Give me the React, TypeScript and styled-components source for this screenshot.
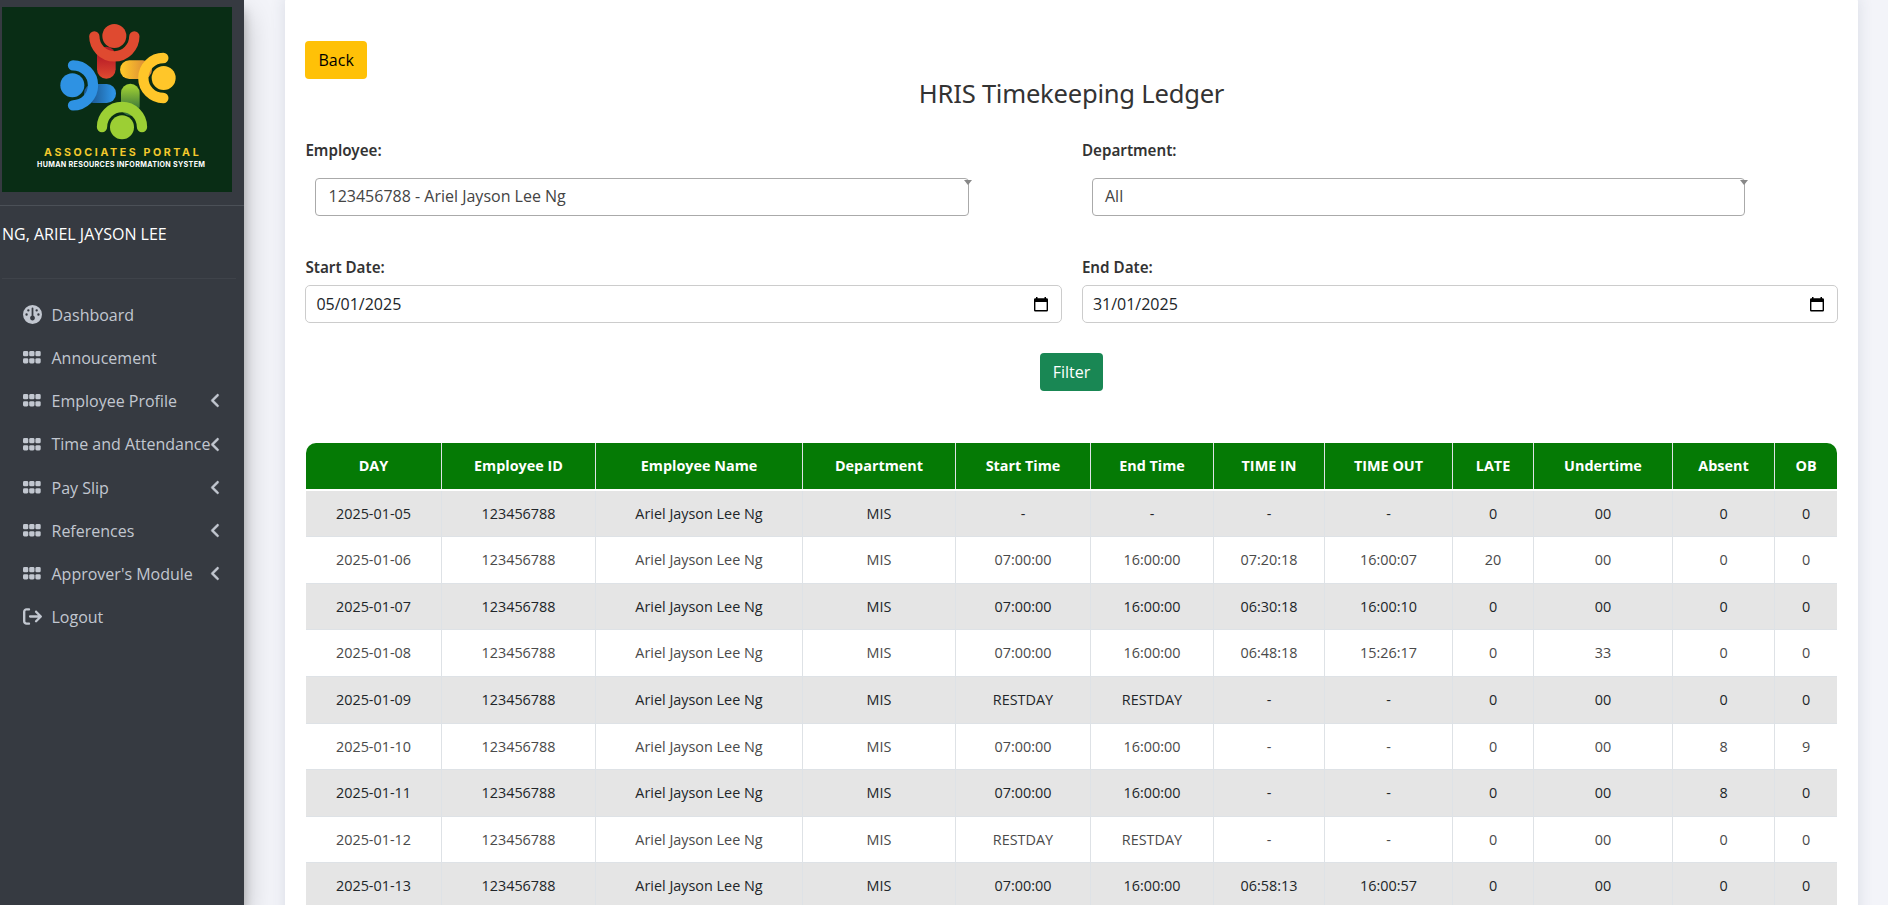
import React from 'react';
import styled, { createGlobalStyle } from 'styled-components';
import { FaGauge, FaAngleLeft, FaArrowRightFromBracket } from 'react-icons/fa6';

const GlobalStyle = createGlobalStyle`
  *, *::before, *::after { box-sizing: border-box; }
  body {
    margin: 0;
    overflow: hidden;
    background: #f3f4f9;
    color: #212529;
    font-family: "Open Sans", sans-serif;
    font-size: 16px;
    line-height: 24px;
  }
`;

const Shell = styled.div`
  display: flex;
  height: 905px;
  overflow: hidden;
`;

const Sidebar = styled.aside`
  position: relative;
  flex: none;
  width: 244px;
  height: 905px;
  background: #363a41;
  box-shadow: 0 14px 28px rgba(0, 0, 0, 0.25), 0 10px 10px rgba(0, 0, 0, 0.22);
`;

const Brand = styled.div`
  height: 206px;
  padding: 7px 0 0 2px;
  border-bottom: 1px solid #4b5057;

  svg {
    display: block;
  }
`;

const UserPanel = styled.div`
  height: 73px;
  margin: 0 8px 0 2px;
  padding-top: 16px;
  border-bottom: 1px solid #3f434a;
  color: #fff;
`;

const Nav = styled.nav`
  display: flex;
  flex-direction: column;
  padding: 14px 8px 0;
`;

const NavItem = styled.a`
  display: flex;
  align-items: center;
  height: 43.17px;
  padding: 0 12px 0 13px;
  color: #c2c7d0;
  white-space: nowrap;
`;

const NavIcon = styled.span`
  flex: none;
  display: flex;
  justify-content: center;
  width: 22px;
  margin: 0 8.500px 0 0;
  font-size: 19px;
`;

const NavLabel = styled.span`
  flex: 1;
  width: 0;
  padding-top: 0.7px;
  overflow: visible;
`;

const NavArrow = styled(FaAngleLeft)`
  flex: none;
  font-size: 17px;
  stroke: currentColor;
  stroke-width: 14px;
`;

const Main = styled.main`
  flex: 1;
  padding: 0 30px 0 41px;
`;

const Card = styled.section`
  height: 930px;
  margin-top: -4px;
  padding: 45px 20px 0;
  border-radius: 6px;
  background: #fff;
  box-shadow: 0 0 16px rgba(50, 60, 90, 0.13);
`;

const Button = styled.button<{ $tone: 'warning' | 'success' }>`
  display: block;
  height: 38px;
  padding: 0 ${({ $tone }) => ($tone === 'warning' ? '13.5px' : '13px')};
  border: 0;
  border-radius: 4px;
  background: ${({ $tone }) => ($tone === 'warning' ? '#ffc107' : '#198754')};
  color: ${({ $tone }) => ($tone === 'warning' ? '#000' : '#fff')};
  font: 16px/24px "Open Sans", sans-serif;
`;

const Title = styled.h1`
  height: 30px;
  margin: 0;
  color: #333;
  font: 400 25.6px/29px "Noto Sans", sans-serif;
  letter-spacing: -0.24px;
  text-align: center;
`;

const Filters = styled.div`
  display: grid;
  grid-template-columns: 756.5px 756.5px;
  column-gap: 20px;
  margin-top: 26px;
`;

const Field = styled.div<{ $h: number }>`
  height: ${({ $h }) => $h}px;
`;

const Label = styled.label`
  display: block;
  height: 29px;
  padding: 3px 0 0 0.4px;
  color: #333;
  font: 600 15.2px/24px "Noto Sans", sans-serif;
`;

const Select = styled.div`
  position: relative;
  width: 653.5px;
  height: 38px;
  margin: 14px 0 0 10px;
  padding: 5px 12.5px;
  border: 1px solid #aaa;
  border-radius: 4px;
  color: #444;

  &::after {
    content: '';
    position: absolute;
    top: 1px;
    right: -4px;
    border: 4px solid transparent;
    border-top: 5px solid #888;
    border-bottom: 0;
  }
`;

const DateBox = styled.div`
  display: flex;
  align-items: center;
  justify-content: space-between;
  height: 38px;
  margin-top: 4px;
  padding: 0 13px 0 10.4px;
  border: 1px solid #ccc;
  border-radius: 5px;
  color: #212529;
`;

const FilterRow = styled.div`
  display: flex;
  justify-content: center;
  margin: 34px 0 52px;
`;

const Table = styled.table`
  display: block;
  width: 1531px;
  margin-left: 1px;
  overflow: hidden;
  border-radius: 10px 10px 0 0;
  font-size: 14.4px;
  line-height: 21.6px;
  text-align: center;

  thead,
  tbody {
    display: block;
  }
`;

const Row = styled.tr<{ $head?: boolean; $striped?: boolean }>`
  display: grid;
  grid-template-columns: 136px 154px 207px 153px 135px 123px 111px 128px 81px 139px 102px 62px;
  height: ${({ $head }) => ($head ? 46 : 46.6)}px;
  margin-bottom: ${({ $head }) => ($head ? 1.6 : 0)}px;
  background: ${({ $head, $striped }) => ($head ? '#057a05' : $striped ? '#e5e5e5' : '#fff')};
  color: ${({ $head, $striped }) => ($head ? '#fff' : $striped ? '#212529' : '#4a4a4a')};
`;

const HeadCell = styled.th`
  padding: 12px 0 0;
  border-right: 1px solid #dee2e6;
  font-weight: 700;

  &:last-child {
    border-right: 0;
  }
`;

const Cell = styled.td`
  padding: 12px 0 0;
  border-right: 1px solid #dee2e6;
  border-bottom: 1px solid #dee2e6;

  &:last-child {
    border-right: 0;
  }
`;

const Logo = () => (
  <svg width="230" height="185" viewBox="6 21 690 555">
    <defs>
      <linearGradient id="red" x1="0" y1="0" x2="0" y2="1">
        <stop offset="0.3" stopColor="#b91d27" />
        <stop offset="1" stopColor="#df4a30" />
      </linearGradient>
      <linearGradient id="blue">
        <stop offset="0.25" stopColor="#1d5c97" />
        <stop offset="0.9" stopColor="#2e92e3" />
      </linearGradient>
      <linearGradient id="yellow">
        <stop offset="0.1" stopColor="#fec52a" />
        <stop offset="0.85" stopColor="#d98a36" />
      </linearGradient>
      <linearGradient id="green" x1="0" y1="0" x2="0" y2="1">
        <stop offset="0.1" stopColor="#9ccd34" />
        <stop offset="0.85" stopColor="#34703a" />
      </linearGradient>
    </defs>
    <rect x="6" y="21" width="690" height="555" fill="#092d15" />
    <rect x="291" y="140" width="56" height="96" rx="28" fill="url(#red)" />
    <rect x="252" y="252" width="96" height="57" rx="28" fill="url(#blue)" />
    <rect x="360" y="181" width="96" height="56" rx="28" fill="url(#yellow)" />
    <rect x="363" y="251" width="56" height="96" rx="28" fill="url(#green)" />
    <g fill="none" strokeWidth="31" strokeLinecap="round">
      <path d="M283 109A60 60 0 0 0 403 109" stroke="#df4a30" />
      <path d="M219 196A60 60 0 0 1 219 316" stroke="#2e92e3" />
      <path d="M490 174A60 60 0 0 0 490 294" stroke="#ffc629" />
      <path d="M306 381A60 60 0 0 1 426 381" stroke="#9ccf34" />
    </g>
    <circle cx="343" cy="108" r="36" fill="#df4a30" />
    <circle cx="217" cy="256" r="36" fill="#2e92e3" />
    <circle cx="491" cy="234" r="36" fill="#ffc629" />
    <circle cx="366" cy="382" r="36" fill="#9ccf34" />
    <g fontFamily="Inter, sans-serif">
      <text x="132" y="467" fontSize="32" fontWeight="700" fill="#f3c92c" textLength="464">ASSOCIATES PORTAL</text>
      <text x="111" y="502" fontSize="21.5" fontWeight="700" fill="#fff" textLength="504">HUMAN RESOURCES INFORMATION SYSTEM</text>
    </g>
  </svg>
);

const CalendarIcon = () => (
  <svg width="14" height="15" viewBox="0 0 14 15">
    <path
      fillRule="evenodd"
      d="M2 0h1.5v1.3h7V0H12v1.3h.6Q14 1.3 14 2.6v10.6q0 1.3-1.3 1.3H1.3Q0 14.5 0 13.2V2.6Q0 1.3 1.4 1.3H2zM1.4 5v8.1h11.2V5z"
    />
  </svg>
);

const GridIcon = () => (
  <svg width="18" height="13" viewBox="0 0 18 13" fill="currentColor">
    {[0, 7.2].map((y) =>
      [0, 6.2, 12.4].map((x) => (
        <rect key={`${x}-${y}`} x={x} y={y} width="5.3" height="5.3" rx="1.4" />
      )),
    )}
  </svg>
);

const NAV = [
  { label: 'Dashboard', icon: FaGauge, arrow: false },
  { label: 'Annoucement', icon: GridIcon, arrow: false },
  { label: 'Employee Profile', icon: GridIcon, arrow: true },
  { label: 'Time and Attendance', icon: GridIcon, arrow: true },
  { label: 'Pay Slip', icon: GridIcon, arrow: true },
  { label: 'References', icon: GridIcon, arrow: true },
  { label: "Approver's Module", icon: GridIcon, arrow: true },
  { label: 'Logout', icon: FaArrowRightFromBracket, arrow: false },
];

const COLUMNS = [
  'DAY', 'Employee ID', 'Employee Name', 'Department', 'Start Time', 'End Time',
  'TIME IN', 'TIME OUT', 'LATE', 'Undertime', 'Absent', 'OB',
];

const RECORDS = [
  ['2025-01-05', '-', '-', '-', '-', '0', '00', '0', '0'],
  ['2025-01-06', '07:00:00', '16:00:00', '07:20:18', '16:00:07', '20', '00', '0', '0'],
  ['2025-01-07', '07:00:00', '16:00:00', '06:30:18', '16:00:10', '0', '00', '0', '0'],
  ['2025-01-08', '07:00:00', '16:00:00', '06:48:18', '15:26:17', '0', '33', '0', '0'],
  ['2025-01-09', 'RESTDAY', 'RESTDAY', '-', '-', '0', '00', '0', '0'],
  ['2025-01-10', '07:00:00', '16:00:00', '-', '-', '0', '00', '8', '9'],
  ['2025-01-11', '07:00:00', '16:00:00', '-', '-', '0', '00', '8', '0'],
  ['2025-01-12', 'RESTDAY', 'RESTDAY', '-', '-', '0', '00', '0', '0'],
  ['2025-01-13', '07:00:00', '16:00:00', '06:58:13', '16:00:57', '0', '00', '0', '0'],
];

export default function App() {
  return (
    <>
      <GlobalStyle />
      <Shell>
        <Sidebar>
          <Brand>
            <Logo />
          </Brand>
          <UserPanel>NG, ARIEL JAYSON LEE</UserPanel>
          <Nav>
            {NAV.map(({ label, icon: Icon, arrow }) => (
              <NavItem key={label}>
                <NavIcon>
                  <Icon />
                </NavIcon>
                <NavLabel>{label}</NavLabel>
                {arrow && <NavArrow />}
              </NavItem>
            ))}
          </Nav>
        </Sidebar>
        <Main>
          <Card>
            <Button $tone="warning">Back</Button>
            <Title>HRIS Timekeeping Ledger</Title>
            <Filters>
              <Field $h={117}>
                <Label>Employee:</Label>
                <Select>123456788 - Ariel Jayson Lee Ng</Select>
              </Field>
              <Field $h={117}>
                <Label>Department:</Label>
                <Select>All</Select>
              </Field>
              <Field $h={67}>
                <Label>Start Date:</Label>
                <DateBox>
                  05/01/2025
                  <CalendarIcon />
                </DateBox>
              </Field>
              <Field $h={67}>
                <Label>End Date:</Label>
                <DateBox>
                  31/01/2025
                  <CalendarIcon />
                </DateBox>
              </Field>
            </Filters>
            <FilterRow>
              <Button $tone="success">Filter</Button>
            </FilterRow>
            <Table>
              <thead>
                <Row $head>
                  {COLUMNS.map((name) => (
                    <HeadCell key={name}>{name}</HeadCell>
                  ))}
                </Row>
              </thead>
              <tbody>
                {RECORDS.map(([day, ...rest], index) => (
                  <Row key={day} $striped={index % 2 === 0}>
                    <Cell>{day}</Cell>
                    <Cell>123456788</Cell>
                    <Cell>Ariel Jayson Lee Ng</Cell>
                    <Cell>MIS</Cell>
                    {rest.map((value, i) => (
                      <Cell key={i}>{value}</Cell>
                    ))}
                  </Row>
                ))}
              </tbody>
            </Table>
          </Card>
        </Main>
      </Shell>
    </>
  );
}
